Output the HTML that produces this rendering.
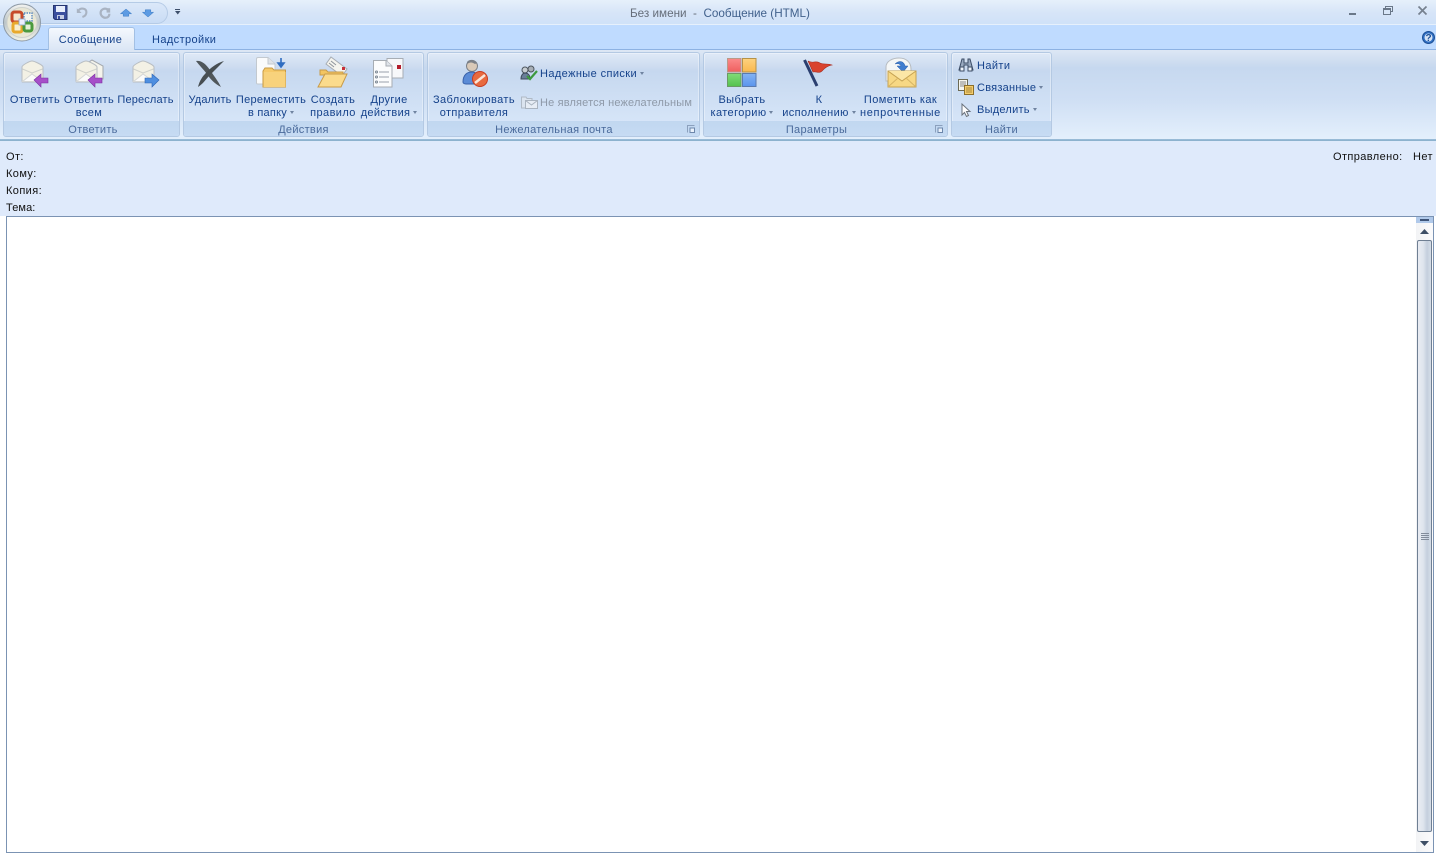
<!DOCTYPE html>
<html lang="ru"><head><meta charset="utf-8"><title>Без имени - Сообщение (HTML)</title>
<style>
html,body{margin:0;padding:0;width:1436px;height:854px;overflow:hidden;background:#fff}
body{position:relative;font-family:"Liberation Sans",sans-serif;font-size:11px;color:#15428b;letter-spacing:.4px}
.a{position:absolute}
.t{position:absolute;white-space:nowrap;line-height:13px;text-align:center}
.g{position:absolute;top:52px;height:85px;box-sizing:border-box;border:1px solid #b4c9e3;border-radius:3px;background:linear-gradient(#dfe9f7 0,#cddcf0 14px,#c6d8ef 18px,#d6e5f8 69px);box-shadow:inset 0 0 0 1px rgba(255,255,255,.35)}
.g .b{position:absolute;left:0;right:0;bottom:0;height:15px;background:linear-gradient(#c1d7f0,#c6dbf3);border-radius:0 0 2px 2px}
.l{position:absolute;top:123px;height:14px;line-height:14px;text-align:center;color:#4a6a9b;white-space:nowrap;letter-spacing:.3px}
.d{display:inline-block;width:0;height:0;border:2.5px solid transparent;border-top:3px solid #6f83a0;border-bottom:0;vertical-align:2px;margin-left:3px}
svg{position:absolute;overflow:visible}
.k{color:#111;position:absolute;left:6px;line-height:13px;white-space:nowrap}
.lau{position:absolute;width:8px;height:8px}
</style></head><body>
<div class="a" style="left:0;top:0;width:1436px;height:25px;background:linear-gradient(#e6f0fb,#d7e5f8 50%,#cfe1f8)"></div>
<div class="a" style="left:0;top:24px;width:1436px;height:1px;background:#e6f0fc"></div>
<div class="a" style="left:0;top:25px;width:1436px;height:25px;background:#bfdbff;border-bottom:0"></div>
<div class="a" style="left:0;top:49px;width:1436px;height:1px;background:#8db2e3"></div>
<div class="a" style="left:0;top:50px;width:1436px;height:89px;background:linear-gradient(#dde7f5 0,#cbdbef 14px,#c6d8ef 18px,#cfdff4 50px,#e3effc 88px)"></div>
<div class="a" style="left:0;top:139px;width:1436px;height:2px;background:linear-gradient(#9ebfdb,#86aeca)"></div>
<div class="a" style="left:0;top:141px;width:1436px;height:75px;background:#dfeafb"></div>

<!-- QAT -->
<div class="a" style="left:30px;top:2px;width:138px;height:22px;box-sizing:border-box;border:1px solid #b5cbe6;border-left:0;border-radius:0 11px 11px 0;background:linear-gradient(#dbe8f9,#c9dcf5)"></div>
<svg style="left:3px;top:3px" width="38" height="38" viewBox="0 0 38 38">
<defs><linearGradient id="o" x1="0" y1="0" x2="0" y2="1"><stop offset="0" stop-color="#f3f3f0"/><stop offset=".5" stop-color="#bcc5c9"/><stop offset="1" stop-color="#f2f3e8"/></linearGradient></defs>
<circle cx="19" cy="19.500" r="18.500" fill="url(#o)" stroke="#8e9aa6"/>
<circle cx="19" cy="19.500" r="15" fill="#e9e7d5" stroke="#cfd2cc"/>
<rect x="9" y="9" width="10" height="10" rx="2.500" fill="#f4e5cf" stroke="#c6492b" stroke-width="3"/>
<rect x="10" y="20" width="9" height="9" rx="2" fill="#f8eecf" stroke="#e8a92d" stroke-width="3"/>
<rect x="21" y="20" width="8" height="8" rx="2" fill="#e6f0d8" stroke="#4b9a3e" stroke-width="3"/>
<rect x="21" y="10" width="8" height="8" fill="#f4f4ee" stroke="#5b8bc0" stroke-width="1.400" stroke-dasharray="1.500 1"/>
<rect x="16" y="16" width="6" height="6" fill="#eef" stroke="#8aa7cc" stroke-width=".8"/>
</svg>
<svg style="left:53px;top:5px" width="15" height="15" viewBox="0 0 15 15"><path d="M.5.500H14V14.500H2L.5 13Z" fill="#3b4f9e" stroke="#26356f"/><rect x="3" y="1" width="9" height="6" fill="#e8eefc"/><rect x="4" y="10" width="7" height="4" fill="#c5cde4"/><rect x="5" y="11" width="2" height="3" fill="#3b4f9e"/></svg>
<svg style="left:76px;top:7px" width="12" height="12" viewBox="0 0 15 14"><path d="M3 4C6 0 13 1 13 6C13 9 11 11 8 12" fill="none" stroke="#a9b3c2" stroke-width="2.600"/><path d="M1 1V7H7Z" fill="#a9b3c2"/></svg>
<svg style="left:99px;top:7px" width="12" height="12" viewBox="0 0 15 14"><path d="M11 3C8 0 2 2 2 7C2 10 5 13 8 13C11 13 13 11 13 8" fill="none" stroke="#a9b3c2" stroke-width="2.800"/><path d="M9.500 1V6.500H14V1Z" fill="#a9b3c2"/></svg>
<svg style="left:120px;top:9px" width="12" height="8" viewBox="0 0 14 10"><path d="M7 0L14 6H10.500V9H3.500V6H0Z" fill="#5d9be3" stroke="#3b78c0" stroke-width=".6"/></svg>
<svg style="left:142px;top:9px" width="12" height="8" viewBox="0 0 14 10"><path d="M7 10L14 4H10.500V1H3.500V4H0Z" fill="#5d9be3" stroke="#3b78c0" stroke-width=".6"/></svg>
<div class="a" style="left:175px;top:9px;width:5px;height:1px;background:#3d4f6b"></div>
<svg style="left:175px;top:11px" width="6" height="4" viewBox="0 0 6 4"><path d="M0 0H5.500L2.750 3.500Z" fill="#3d4f6b"/></svg>

<div class="t" style="left:630px;top:7px;font-size:11.700px;letter-spacing:0"><span style="color:#656d79">Без имени&nbsp; -&nbsp; </span><span style="color:#41618c">Сообщение (HTML)</span></div>
<!-- window buttons -->
<div class="a" style="left:1349px;top:13px;width:7px;height:2px;background:#6a7889"></div>
<svg style="left:1383px;top:6px" width="10" height="9" viewBox="0 0 10 9"><path d="M2.500 2V.500H9.500V5.500H8" fill="none" stroke="#6a7889"/><rect x=".5" y="2.500" width="7" height="6" fill="#d8e6f8" stroke="#6a7889"/><rect x="0" y="2" width="8" height="2" fill="#6a7889"/></svg>
<svg style="left:1418px;top:6px" width="9" height="9" viewBox="0 0 9 9"><path d="M.5.500L8.500 8.500M8.500.500L.5 8.500" stroke="#76818f" stroke-width="1.700"/></svg>
<svg style="left:1422px;top:31px" width="13" height="13" viewBox="0 0 13 13"><circle cx="6.500" cy="6.500" r="6" fill="#2f6fc4" stroke="#1d4f95"/><circle cx="6.500" cy="6.500" r="4" fill="#e8f0fb" opacity=".9"/><text x="6.500" y="10" text-anchor="middle" font-size="10" font-weight="700" fill="#1d4f95" font-family="Liberation Sans" letter-spacing="0">?</text></svg>

<!-- tabs -->
<div class="a" style="left:48px;top:27px;width:87px;height:23px;box-sizing:border-box;border:1px solid #a3c0e4;border-bottom:0;border-radius:3px 3px 0 0;background:linear-gradient(#f4f8fe,#dbe6f5)"></div>
<div class="t" style="left:48px;top:34px;width:85px;color:#15428b">Сообщение</div>
<div class="t" style="left:152px;top:34px;color:#15428b">Надстройки</div>

<!-- groups -->
<div class="g" style="left:3px;width:177px"><div class="b"></div></div>
<div class="g" style="left:183px;width:241px"><div class="b"></div></div>
<div class="g" style="left:427px;width:273px"><div class="b"></div></div>
<div class="g" style="left:703px;width:245px"><div class="b"></div></div>
<div class="g" style="left:951px;width:101px"><div class="b"></div></div>

<div class="l" style="left:3px;width:180px">Ответить</div>
<div class="l" style="left:183px;width:241px">Действия</div>
<div class="l" style="left:427px;width:254px">Нежелательная почта</div>
<div class="l" style="left:703px;width:227px">Параметры</div>
<div class="l" style="left:951px;width:101px">Найти</div>

<!-- launchers -->
<svg class="lau" style="left:687px;top:125px" viewBox="0 0 8 8"><path d="M.5 7.500V.5H7.500" fill="none" stroke="#8ba0bd"/><rect x="3" y="3" width="4.500" height="4.500" fill="#e9f1fb" stroke="#6d87ab"/></svg>
<svg class="lau" style="left:935px;top:125px" viewBox="0 0 8 8"><path d="M.5 7.500V.5H7.500" fill="none" stroke="#8ba0bd"/><rect x="3" y="3" width="4.500" height="4.500" fill="#e9f1fb" stroke="#6d87ab"/></svg>

<!-- reply icons -->
<svg style="left:21px;top:60px" width="28" height="28" viewBox="0 0 28 28"><path d="M1 7C1 5 9 1 11 1C13 1 22 5 22 7V21C22 22 21 22 20 22H2C1 22 1 22 1 21Z" fill="#f3f1e5" stroke="#b8bdc2"/><path d="M1.500 9L11 13L21.500 9" fill="none" stroke="#cfd1cc"/><path d="M1.500 21.500L11 14L21.500 21.500Z" fill="#fbfbfa" stroke="#d5d7d6"/><path d="M13 20L20 14V18H27V23H20V27Z" fill="#a64fc9" stroke="#7a2fa0" stroke-width=".6"/></svg>
<svg style="left:75px;top:58px" width="30" height="30" viewBox="0 0 30 30"><path d="M8 8L17 2L28 8V21H8Z" fill="#f5f4ec" stroke="#a4a8ad"/><path d="M1 9C1 7 9 3 11 3C13 3 22 7 22 9V23C22 24 21 24 20 24H2C1 24 1 24 1 23Z" fill="#f3f1e5" stroke="#b8bdc2"/><path d="M1.500 11L11 15L21.500 11" fill="none" stroke="#cfd1cc"/><path d="M1.500 23.500L11 16L21.500 23.500Z" fill="#fbfbfa" stroke="#d5d7d6"/><path d="M13 22L20 16V20H27V25H20V29Z" fill="#a64fc9" stroke="#7a2fa0" stroke-width=".6"/></svg>
<svg style="left:132px;top:60px" width="28" height="28" viewBox="0 0 28 28"><path d="M1 7C1 5 9 1 11 1C13 1 22 5 22 7V21C22 22 21 22 20 22H2C1 22 1 22 1 21Z" fill="#f3f1e5" stroke="#b8bdc2"/><path d="M1.500 9L11 13L21.500 9" fill="none" stroke="#cfd1cc"/><path d="M1.500 21.500L11 14L21.500 21.500Z" fill="#fbfbfa" stroke="#d5d7d6"/><path d="M27 20L20 14V18H13V23H20V27Z" fill="#4f8fe0" stroke="#2b64b4" stroke-width=".6"/></svg>

<div class="t" style="left:5px;top:94px;width:60px">Ответить</div>
<div class="t" style="left:59px;top:94px;width:60px">Ответить<br>всем</div>
<div class="t" style="left:113px;top:94px;width:65px;letter-spacing:.15px">Переслать</div>

<!-- actions -->
<svg style="left:195px;top:59px" width="30" height="29" viewBox="0 0 30 29"><path d="M1 2C6 1 11 5 15 11C19 17 23 22 26 28C20 25 15 20 12 15C8 10 4 6 1 2Z" fill="#50575b"/><path d="M29 2C22 4 15 9 10 15C6 19 4 24 3 28C8 25 11 20 15 16C20 11 25 6 29 2Z" fill="#474e52"/></svg>
<div class="t" style="left:180px;top:94px;width:60px;letter-spacing:.15px">Удалить</div>
<svg style="left:255px;top:56px" width="32" height="32" viewBox="0 0 32 32"><path d="M1.500 3Q1.500 1.500 3 1.500H13L20 8V28H3Q1.500 28 1.500 27Z" fill="#fafbfc" stroke="#c3c9cf"/><path d="M13 1.500V8H20" fill="#dfe3e8" stroke="#c3c9cf"/><path d="M8 15L10 12H17L19 14H30.500V31H8Z" fill="#f6c969" stroke="#c79a45"/><rect x="8.500" y="16" width="22" height="15" fill="#f8d27c"/><path d="M26 2V8M23 7L26 11L29 7Z" stroke="#2f6cc0" stroke-width="1.600" fill="#2f6cc0"/></svg>
<div class="t" style="left:231px;top:94px;width:80px;letter-spacing:.25px">Переместить<br>в папку<span class="d"></span></div>
<svg style="left:317px;top:56px" width="32" height="32" viewBox="0 0 32 32"><path d="M14 1L30 13L25 20L9 8Z" fill="#f5f4ee" stroke="#a7adb4"/><path d="M14 5L19 9M12 7L17 11" stroke="#8e949b"/><rect x="25" y="11" width="3" height="3" fill="#c7303a"/><path d="M3 14H9L11 16H26V19H3Z" fill="#f3c561" stroke="#c89b49"/><path d="M8 18H30L24 31H1Z" fill="#fbdb8c" stroke="#c89b49"/></svg>
<div class="t" style="left:303px;top:94px;width:60px">Создать<br>правило</div>
<svg style="left:372px;top:57px" width="32" height="31" viewBox="0 0 32 31"><path d="M15 1.500H31V21H15Z" fill="#f7f8fa" stroke="#a7adb4"/><rect x="25" y="8" width="4" height="4" fill="#b31d2c"/><path d="M1.500 3.500H14L20 9V30H1.500Z" fill="#fbfcfd" stroke="#a7adb4"/><path d="M14 3.500V9H20" fill="#dfe4ea" stroke="#a7adb4"/><path d="M7 15H17M7 20H17M7 25H17" stroke="#9aa1aa"/><circle cx="4.500" cy="15" r="1" fill="none" stroke="#7b8793"/><circle cx="4.500" cy="20" r="1" fill="none" stroke="#7b8793"/><circle cx="4.500" cy="25" r="1" fill="none" stroke="#7b8793"/></svg>
<div class="t" style="left:359px;top:94px;width:60px;letter-spacing:.3px">Другие<br>действия<span class="d"></span></div>

<!-- junk -->
<svg style="left:461px;top:58px" width="28" height="30" viewBox="0 0 28 30"><circle cx="11" cy="8" r="5.500" fill="#d9c9b8" stroke="#7b8088"/><path d="M6 4C8 1 14 1 16 5L14 6C11 4 9 4 6 6Z" fill="#7b8088"/><path d="M2 24C2 17 6 14 11 14C15 14 18 17 19 22L16 26H5C3 26 2 25 2 24Z" fill="#5b8bd6" stroke="#3a62aa"/><circle cx="19" cy="21" r="7.500" fill="#e86a3f" stroke="#c73b21"/><path d="M14 25L24 17" stroke="#fae5d8" stroke-width="2.500"/></svg>
<div class="t" style="left:429px;top:94px;width:90px">Заблокировать<br>отправителя</div>
<svg style="left:520px;top:65px" width="18" height="16" viewBox="0 0 18 16"><circle cx="5" cy="5" r="3" fill="#c7cdd2" stroke="#4c545c"/><circle cx="11" cy="4" r="3" fill="#a7aeb5" stroke="#4c545c"/><path d="M1 14C1 10 3 8 5 8C8 8 10 10 10 14Z" fill="#6a7e99" stroke="#3d4a5c"/><path d="M7 11L10 14L17 6" fill="none" stroke="#3d9a3e" stroke-width="2.200"/></svg>
<div class="t" style="left:540px;top:68px">Надежные списки<span class="d"></span></div>
<svg style="left:521px;top:95px" width="17" height="14" viewBox="0 0 17 14"><path d="M.5 2H5L6 3.500H11V13H.5Z" fill="#dbe4ef" stroke="#b0bac6"/><rect x="4.500" y="5.500" width="12" height="8" fill="#e7edf5" stroke="#aab4c0"/><path d="M4.500 5.500L10.500 10L16.500 5.500" fill="none" stroke="#aab4c0"/></svg>
<div class="t" style="left:540px;top:97px;color:#8e99a8;letter-spacing:.16px">Не является нежелательным</div>

<!-- params -->
<svg style="left:727px;top:58px" width="30" height="29" viewBox="0 0 30 29"><defs><linearGradient id="r" x1="0" y1="0" x2="0" y2="1"><stop offset="0" stop-color="#fb8a8a"/><stop offset="1" stop-color="#ef5f5f"/></linearGradient><linearGradient id="y" x1="0" y1="0" x2="0" y2="1"><stop offset="0" stop-color="#fdd27f"/><stop offset="1" stop-color="#fab84e"/></linearGradient><linearGradient id="gr" x1="0" y1="0" x2="0" y2="1"><stop offset="0" stop-color="#80dc78"/><stop offset="1" stop-color="#55c24e"/></linearGradient><linearGradient id="bl" x1="0" y1="0" x2="0" y2="1"><stop offset="0" stop-color="#83b3f3"/><stop offset="1" stop-color="#5a94ec"/></linearGradient></defs><rect x=".5" y=".5" width="13.500" height="13.500" fill="url(#r)" stroke="#b98"/><rect x="15.500" y=".5" width="13.500" height="13.500" fill="url(#y)" stroke="#b69248"/><rect x=".5" y="15.500" width="13.500" height="13" fill="url(#gr)" stroke="#6a9a65"/><rect x="15.500" y="15.500" width="13.500" height="13" fill="url(#bl)" stroke="#5a7aae"/></svg>
<div class="t" style="left:703px;top:94px;width:78px">Выбрать<br>категорию<span class="d"></span></div>
<svg style="left:803px;top:58px" width="30" height="30" viewBox="0 0 30 30"><path d="M1.500 2L14 28" stroke="#2b3f70" stroke-width="3"/><path d="M5 3C9 6 13 2 17 5C21 7 24 5 29 7C24 8 22 10 19 13C16 16 13 13 10 14Z" fill="#d9432f" stroke="#a62a1e" stroke-width=".6"/></svg>
<div class="t" style="left:777px;top:94px;width:84px">К<br>исполнению<span class="d"></span></div>
<svg style="left:885px;top:57px" width="32" height="32" viewBox="0 0 32 32"><path d="M1 10C1 4 8 1 14 1C21 1 26 5 26 12V24H1Z" fill="#f4f6f6" stroke="#b6bbc0"/><path d="M10 7C14 3 19 4 20 9H23L18 15L12 9H16C15 7 13 6 10 7Z" fill="#3f7dcf" stroke="#2a5da8" stroke-width=".5"/><path d="M3 14H31V30H3Z" fill="#f7d884" stroke="#c5a252"/><path d="M3 14L17 24L31 14" fill="#fbe6a6" stroke="#c5a252"/><path d="M3 30L13 21M31 30L21 21" stroke="#d6b465"/></svg>
<div class="t" style="left:850px;top:94px;width:101px">Пометить как<br><span style="letter-spacing:.65px">непрочтенные</span></div>

<!-- find -->
<svg style="left:958px;top:58px" width="16" height="14" viewBox="0 0 16 14"><path d="M4 1H6V5H10V1H12L15 12H10V7H6V12H1Z" fill="#9aaac0" stroke="#3c4d66"/><rect x="2" y="9" width="4" height="4" fill="#eef3fa" stroke="#3c4d66"/><rect x="10" y="9" width="4" height="4" fill="#eef3fa" stroke="#3c4d66"/></svg>
<div class="t" style="left:977px;top:60px">Найти</div>
<svg style="left:958px;top:79px" width="16" height="16" viewBox="0 0 16 16"><rect x=".5" y=".5" width="9" height="11" fill="#f5f5ef" stroke="#6c6a55"/><path d="M2 3H8M2 5H8M2 7H8" stroke="#888"/><rect x="6.500" y="6.500" width="9" height="9" fill="#f4cc6c" stroke="#8c6f2a"/><path d="M8 9H14M8 11H14M8 13H14" stroke="#a8873c"/></svg>
<div class="t" style="left:977px;top:82px;letter-spacing:.25px">Связанные<span class="d"></span></div>
<svg style="left:961px;top:103px" width="11" height="14" viewBox="0 0 11 14"><path d="M1 1V12L3.500 9.500L5.500 13.500L7.500 12.500L5.500 8.500H9Z" fill="#fff" stroke="#6a727b"/></svg>
<div class="t" style="left:977px;top:104px;letter-spacing:.25px">Выделить<span class="d"></span></div>

<!-- header -->
<div class="k" style="top:151px">От:</div>
<div class="k" style="top:168px">Кому:</div>
<div class="k" style="top:185px">Копия:</div>
<div class="k" style="top:202px;letter-spacing:.1px">Тема:</div>
<div class="t" style="left:1333px;top:151px;color:#111">Отправлено:</div>
<div class="t" style="left:1413px;top:151px;color:#111">Нет</div>

<!-- body -->
<div class="a" style="left:6px;top:216px;width:1428px;height:637px;box-sizing:border-box;border:1px solid #7b93b3;background:#fff"></div>
<div class="a" style="left:1416px;top:217px;width:17px;height:635px;background:linear-gradient(90deg,#f2f3f5,#fbfbfc)"></div>
<div class="a" style="left:1416px;top:217px;width:17px;height:6px;background:#b0c9ea"></div>
<div class="a" style="left:1420px;top:219px;width:9px;height:2px;background:#3e5478"></div>
<svg style="left:1420px;top:229px" width="9" height="5" viewBox="0 0 9 5"><path d="M4.500 0L9 5H0Z" fill="#3e4f66"/></svg>
<div class="a" style="left:1417px;top:240px;width:15px;height:592px;box-sizing:border-box;border:1px solid #6f7f93;border-radius:2px;background:linear-gradient(90deg,#e9ecf2,#dfe5ee 40%,#c4cfdd 70%,#d5dde8)"></div>
<div class="a" style="left:1421px;top:533px;width:8px;height:1px;background:#828c9b;box-shadow:0 2px 0 #828c9b,0 4px 0 #828c9b,0 6px 0 #828c9b"></div>
<svg style="left:1420px;top:841px" width="9" height="5" viewBox="0 0 9 5"><path d="M4.500 5L9 0H0Z" fill="#3e4f66"/></svg>
</body></html>
